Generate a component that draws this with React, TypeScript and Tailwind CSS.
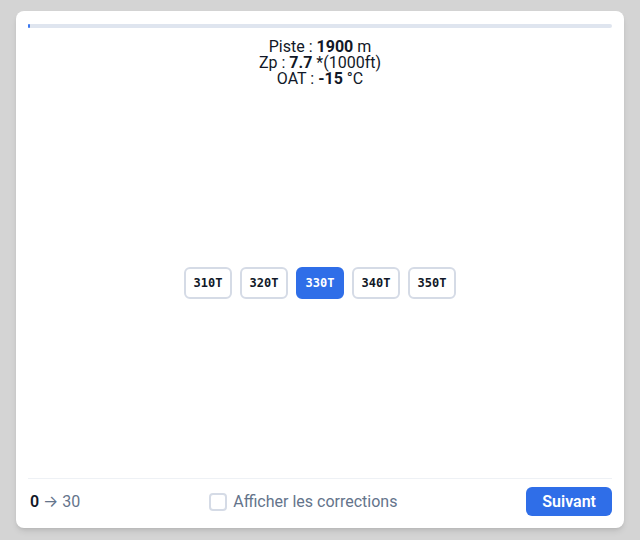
import React, { useState } from 'react';

const TYPES = ['310T', '320T', '330T', '340T', '350T'];

export default function App() {
  const [selected, setSelected] = useState('330T');
  const [showCorrections, setShowCorrections] = useState(false);

  return (
    <div className="h-screen bg-[#d4d4d4] px-4 pt-[11px] pb-3 font-['Roboto',sans-serif]">
      <div className="flex h-full flex-col rounded-lg bg-white px-3 pt-3 pb-3 shadow-md">
        {/* progress */}
        <div className="mt-[1px] h-1 w-full rounded-full bg-[#dfe5ef]">
          <div className="h-1 w-[2px] rounded-full bg-[#3b78f0]" />
        </div>

        <div className="mt-[11px] text-center text-[16px] leading-[16px] text-[#111827]">
          <div>
            Piste : <b className="font-bold">1900</b> m
          </div>
          <div>
            Zp : <b className="font-bold">7.7</b> *(1000ft)
          </div>
          <div>
            OAT : <b className="font-bold">-15</b> °C
          </div>
        </div>

        <div className="flex flex-1 items-center justify-center gap-2 pt-[1px]">
          {TYPES.map((t) => (
            <button
              key={t}
              onClick={() => setSelected(t)}
              className={
                t === selected
                  ? "h-8 w-12 rounded-md border-2 border-[#2f6ee8] bg-[#2f6ee8] font-['DejaVu_Sans_Mono',monospace] text-[12px] font-bold text-white"
                  : "h-8 w-12 rounded-md border-2 border-[#d5dbe6] bg-white font-['DejaVu_Sans_Mono',monospace] text-[12px] font-bold text-[#111827]"
              }
            >
              {t}
            </button>
          ))}
        </div>

        <div className="flex items-center justify-between border-t border-[#eef1f5] pt-2">
          <div className="pl-[2px] text-[16px] text-[#64748b]">
            <span className="font-semibold text-[#111827]">0</span>{' '}
            <span className="font-['Inter',sans-serif]">→</span> 30
          </div>
          <label className="flex items-center gap-[6px] text-[16px] text-[#64748b]">
            <input
              type="checkbox"
              checked={showCorrections}
              onChange={(e) => setShowCorrections(e.target.checked)}
              className="h-[18px] w-[18px] appearance-none rounded-[4px] border-2 border-[#d5dbe6] bg-white"
            />
            Afficher les corrections
          </label>
          <button className="h-[29px] rounded-md bg-[#2f6ee8] px-4 text-[16px] font-semibold text-white">
            Suivant
          </button>
        </div>
      </div>
    </div>
  );
}
